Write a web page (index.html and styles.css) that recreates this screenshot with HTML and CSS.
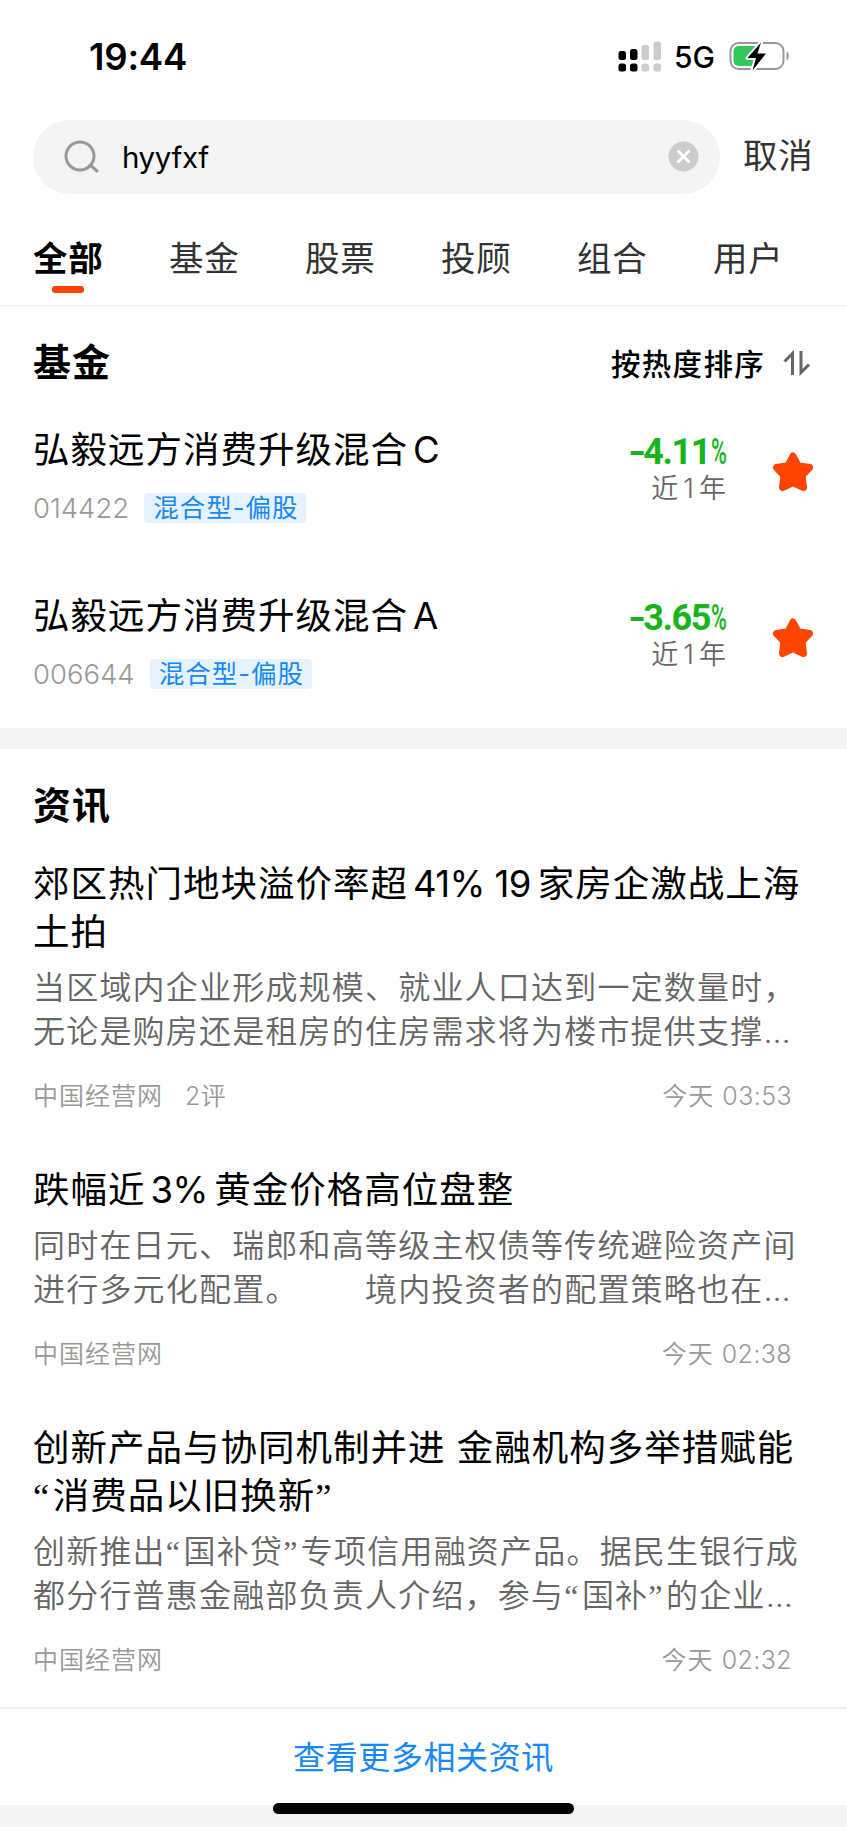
FILE: index.html
```html
<!DOCTYPE html>
<html lang="zh-CN">
<head>
<meta charset="UTF-8">
<meta name="viewport" content="width=device-width, initial-scale=1.0">
<title>搜索</title>
<link rel="stylesheet" href="styles.css">
</head>
<body>

<header class="status-bar">
  <span class="time">19:44</span>
  <div class="status-icons">
    <svg class="signal" width="44" height="31" viewBox="0 0 44 31">
      <g fill="#000">
        <rect x="0.5" y="10" width="7.5" height="9" rx="2.5"/>
        <rect x="12" y="8" width="7.5" height="11" rx="2.5"/>
        <rect x="0.5" y="22.5" width="7.5" height="8" rx="2.5"/>
        <rect x="12" y="22.5" width="7.5" height="8" rx="2.5"/>
      </g>
      <g fill="#ccc">
        <rect x="23.5" y="4" width="7.5" height="15" rx="2.5"/>
        <rect x="35.5" y="0.5" width="7.5" height="18.5" rx="2.5"/>
        <rect x="23.5" y="22.5" width="7.5" height="8" rx="2.5"/>
        <rect x="35.5" y="22.5" width="7.5" height="8" rx="2.5"/>
      </g>
    </svg>
    <span class="network">5G</span>
    <svg class="battery" width="61" height="32" viewBox="0 0 61 32">
      <rect x="1.5" y="3" width="53" height="26" rx="8" fill="none" stroke="#999" stroke-width="2"/>
      <path d="M57.5 11.5v9c3-1.2 3-7.8 0-9z" fill="#999"/>
      <rect x="4.5" y="6" width="25" height="20" rx="5" fill="#34c759"/>
      <path d="M32 2.500L18.500 18h8.500l-3.500 12.500L37 13.500h-8.500z" fill="#000" stroke="#fff" stroke-width="4" stroke-linejoin="round" paint-order="stroke"/>
    </svg>
  </div>
</header>

<div class="search">
  <div class="search-box">
    <svg class="icon-search" width="36" height="33" viewBox="0 0 36 33">
      <circle cx="16" cy="16" r="14" fill="none" stroke="#999" stroke-width="3"/>
      <path d="M26 25l7 6" stroke="#999" stroke-width="3" stroke-linecap="round"/>
    </svg>
    <span class="search-text">hyyfxf</span>
    <svg class="icon-clear" width="31" height="31" viewBox="0 0 31 31">
      <circle cx="15.5" cy="15.5" r="15" fill="#ccc"/>
      <path d="M9.5 9.5l12 12M21.5 9.5l-12 12" stroke="#fff" stroke-width="3"/>
    </svg>
  </div>
  <span class="cancel">取消</span>
</div>

<nav class="tabs">
  <span class="tab active">全部</span>
  <span class="tab">基金</span>
  <span class="tab">股票</span>
  <span class="tab">投顾</span>
  <span class="tab">组合</span>
  <span class="tab">用户</span>
</nav>

<section class="funds">
  <div class="section-head">
    <h2>基金</h2>
    <div class="sort">
      <span>按热度排序</span>
      <svg width="28" height="26" viewBox="0 0 28 26">
        <path d="M1.500 11.500L9.500 3.500V25" fill="none" stroke="#666" stroke-width="3"/>
        <path d="M18 1v21.500L26 14.500" fill="none" stroke="#666" stroke-width="3"/>
      </svg>
    </div>
  </div>

  <div class="fund">
    <div class="fund-info">
      <h3>弘毅远方消费升级混合<span class="latin">C</span></h3>
      <div class="fund-meta"><span class="code">014422</span><span class="tag">混合型-偏股</span></div>
    </div>
    <div class="fund-rate">
      <div class="rate"><span class="minus">-</span>4.11<span class="percent">%</span></div>
      <div class="period">近<span class="num">1</span>年</div>
    </div>
    <svg class="star" width="42" height="41" viewBox="0 0 42 41">
      <path d="M21 4l5 9.700L37.500 15.500 30 23.500 31.500 35.500 21 30.500 10.500 35.500 12 23.500 4.500 15.500 16 13.700z" fill="#ff4400" stroke="#ff4400" stroke-width="7" stroke-linejoin="round"/>
    </svg>
  </div>

  <div class="fund">
    <div class="fund-info">
      <h3>弘毅远方消费升级混合<span class="latin">A</span></h3>
      <div class="fund-meta"><span class="code">006644</span><span class="tag">混合型-偏股</span></div>
    </div>
    <div class="fund-rate">
      <div class="rate"><span class="minus">-</span>3.65<span class="percent">%</span></div>
      <div class="period">近<span class="num">1</span>年</div>
    </div>
    <svg class="star" width="42" height="41" viewBox="0 0 42 41">
      <path d="M21 4l5 9.700L37.500 15.500 30 23.500 31.500 35.500 21 30.500 10.500 35.500 12 23.500 4.500 15.500 16 13.700z" fill="#ff4400" stroke="#ff4400" stroke-width="7" stroke-linejoin="round"/>
    </svg>
  </div>
</section>

<section class="news">
  <h2>资讯</h2>

  <article class="news-item">
    <h3>郊区热门地块溢价率超<span class="latin">41% 19</span><span class="after">家房企激战上海</span><br>土拍</h3>
    <p>当区域内企业形成规模、就业人口达到一定数量时，<br>无论是购房还是租房的住房需求将为楼市提供支撑<span class="dots">…</span></p>
    <div class="news-meta"><span>中国经营网<span class="comments"><span class="num">2</span>评</span></span><span>今天 <span class="num">03:53</span></span></div>
  </article>

  <article class="news-item">
    <h3>跌幅近<span class="latin percent-gap">3% </span>黄金价格高位盘整</h3>
    <p>同时在日元、瑞郎和高等级主权债等传统避险资产间<br>进行多元化配置。　　境内投资者的配置策略也在<span class="dots">…</span></p>
    <div class="news-meta"><span>中国经营网</span><span>今天 <span class="num">02:38</span></span></div>
  </article>

  <article class="news-item">
    <h3>创新产品与协同机制并进 金融机构多举措赋能<br><span class="quote">“</span>消费品以旧换新<span class="quote">”</span></h3>
    <p>创新推出<span class="quote">“</span>国补贷<span class="quote">”</span>专项信用融资产品。据民生银行成<br>都分行普惠金融部负责人介绍，参与<span class="quote">“</span>国补<span class="quote">”</span>的企业<span class="dots">…</span></p>
    <div class="news-meta"><span>中国经营网</span><span>今天 <span class="num">02:32</span></span></div>
  </article>
</section>

<a class="more">查看更多相关资讯</a>

<footer class="bottom">
  <div class="home-indicator"></div>
</footer>

</body>
</html>
```
FILE: styles.css
```css
* {
  box-sizing: border-box;
}

body {
  margin: 0;
  width: 847px;
  height: 1832px;
  overflow: hidden;
  background-color: #fff;
  color: #000;
  font-family: Inter, "Noto Sans CJK SC", sans-serif;
  white-space: nowrap;
  text-spacing-trim: space-all;
}

h2,
h3,
p {
  margin: 0;
}

svg {
  display: block;
  flex: none;
}

.status-bar {
  display: flex;
  justify-content: space-between;
  height: 119px;
  padding: 37px 57px 0 89px;
}

.time {
  font-size: 36.5px;
  font-weight: 600;
  letter-spacing: -0.2px;
  line-height: 40px;
}

.status-icons {
  display: flex;
  align-items: flex-start;
  height: 40px;
}

.signal {
  margin-top: 4px;
}

.network {
  margin: 0 14px 0 12px;
  font-size: 30px;
  font-weight: 500;
  line-height: 41px;
}

.battery {
  margin-top: 3px;
}

.search {
  display: flex;
  align-items: center;
  height: 75px;
  padding: 0 0 0 33px;
}

.search-box {
  display: flex;
  flex: none;
  align-items: center;
  width: 687px;
  height: 74px;
  padding: 0 21px 0 31px;
  border-radius: 37px;
  background-color: #f4f4f4;
}

.search-text {
  flex: 1;
  margin-left: 22px;
  font-size: 29.5px;
  letter-spacing: -0.4px;
  line-height: 40px;
}

.cancel {
  margin: -2px 0 0 23px;
  font-size: 34.5px;
  letter-spacing: 0.8px;
  line-height: 72px;
  color: #333;
}

.tabs {
  display: flex;
  gap: 65px;
  height: 113px;
  padding: 40px 33px 0;
  border-bottom: 2px solid #f4f4f4;
}

.tab {
  width: 71px;
  font-size: 34.5px;
  letter-spacing: 0.8px;
  line-height: 50px;
  color: #333;
}

.tab.active {
  font-weight: 700;
  color: #000;
}

.tab.active::after {
  content: "";
  display: block;
  width: 32px;
  height: 7px;
  margin: 2px 0 0 19px;
  border-radius: 3px;
  background-color: #ff4400;
}

.funds {
  height: 421px;
  padding: 25px 33px 0;
  background-color: #fff;
}

.section-head {
  display: flex;
  justify-content: space-between;
  align-items: center;
  height: 60px;
}

h2 {
  font-size: 38px;
  font-weight: 700;
  letter-spacing: 1px;
  line-height: 60px;
}

.sort {
  display: flex;
  align-items: center;
  gap: 18px;
  margin: -1px 3px 0 0;
  font-size: 29.5px;
  font-weight: 500;
  letter-spacing: 1.3px;
}

.sort svg {
  margin-top: 2px;
}

.fund {
  display: flex;
  height: 166px;
  padding-top: 34px;
}

.fund-info {
  flex: 1;
}

h3 {
  font-size: 36.5px;
  font-weight: 400;
  letter-spacing: 1px;
  line-height: 48px;
}

.latin {
  margin-left: 5px;
  letter-spacing: -0.6px;
}

.after {
  margin-left: 7px;
}

.percent-gap {
  margin-right: -3px;
}

.fund-meta {
  display: flex;
  align-items: center;
  height: 30px;
  margin-top: 19px;
}

.code {
  font-size: 27.5px;
  font-weight: 300;
  color: #999;
}

.tag {
  height: 30px;
  margin-left: 15px;
  padding: 0 8px 0 9px;
  border-radius: 4px;
  background-color: #e6f2fd;
  font-size: 25.5px;
  letter-spacing: 1px;
  line-height: 30px;
  color: #1788f8;
}

.fund-rate {
  margin-right: 44px;
  text-align: right;
}

.rate {
  margin-top: 6px;
  font-family: Roboto, sans-serif;
  font-size: 36px;
  font-weight: 700;
  letter-spacing: -1.4px;
  line-height: 40px;
  color: #18b41c;
}

.minus {
  display: inline-block;
  transform: scaleX(1.3);
}

.percent {
  display: inline-block;
  width: 17px;
  margin-left: 1px;
  font-weight: 500;
  transform: scaleX(0.6);
  transform-origin: left;
}

.period {
  margin-right: 2px;
  font-size: 27px;
  font-weight: 350;
  line-height: 34px;
  color: #666;
}

.period .num {
  margin: 0 5px;
}

.star {
  margin-top: 26px;
}

.news {
  height: 979px;
  padding: 26px 33px 0;
  border-top: 21px solid #f4f4f4;
}

.news-item {
  margin-bottom: 50px;
}

.news h2 {
  margin-bottom: 25px;
}

.news p {
  margin-top: 10px;
  font-size: 32px;
  font-weight: 350;
  letter-spacing: 1.2px;
  line-height: 43.5px;
  color: #666;
}

.quote {
  font-family: "Liberation Serif", serif;
  letter-spacing: 3.5px;
  line-height: 1;
}

.dots {
  letter-spacing: 0;
}

.news-meta {
  display: flex;
  justify-content: space-between;
  margin-top: 23px;
  padding-right: 22px;
  font-size: 25px;
  font-weight: 350;
  letter-spacing: 1px;
  line-height: 40px;
  color: #999;
}

.news-meta .num {
  letter-spacing: 0.4px;
}

.comments {
  margin-left: 22px;
}

.more {
  display: block;
  height: 98px;
  border-top: 2px solid #f1f1f1;
  font-size: 32px;
  letter-spacing: 0.6px;
  line-height: 98px;
  text-align: center;
  color: #1788f8;
}

.bottom {
  height: 22px;
  background-color: #f4f4f4;
}

.home-indicator {
  position: relative;
  top: -2px;
  width: 301px;
  height: 11px;
  margin: 0 auto;
  border-radius: 6px;
  background-color: #000;
}
```
